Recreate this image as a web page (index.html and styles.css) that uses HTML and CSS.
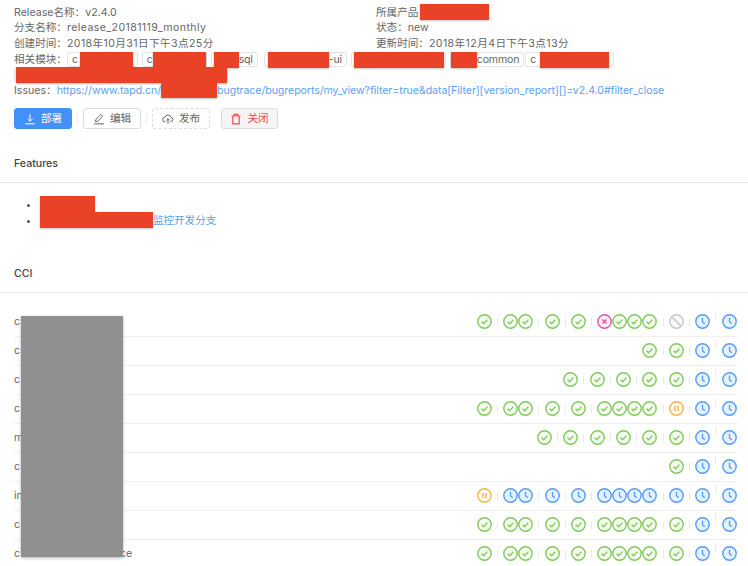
FILE: index.html
```html
<!DOCTYPE html>
<html lang="zh-CN">
<head>
    <meta charset="UTF-8">
    <meta name="viewport" content="width=device-width, initial-scale=1.0">
    <title>Release v2.4.0</title>
    <link rel="stylesheet" href="styles.css">
</head>
<body>
    <svg class="sprite" aria-hidden="true">
        <symbol id="ok" viewBox="0 0 15 15"><circle cx="7.5" cy="7.5" r="6.7" fill="#f6fdf0" stroke="#7fca5c" stroke-width="1.4"/><path d="M4.6 7.7l2.1 2.1 3.7-4.2" fill="none" stroke="#7fca5c" stroke-width="1.4"/></symbol>
        <symbol id="fail" viewBox="0 0 15 15"><circle cx="7.5" cy="7.5" r="6.7" fill="#fff0f7" stroke="#e552a2" stroke-width="1.4"/><path d="M5.4 5.4l4.2 4.2M9.6 5.4l-4.2 4.2" fill="none" stroke="#e552a2" stroke-width="1.4"/></symbol>
        <symbol id="ban" viewBox="0 0 15 15"><circle cx="7.5" cy="7.5" r="6.7" fill="#fafafa" stroke="#c6c6c6" stroke-width="1.4"/><path d="M3 3l9 9" fill="none" stroke="#c6c6c6" stroke-width="1.4"/></symbol>
        <symbol id="wait" viewBox="0 0 15 15"><circle cx="7.5" cy="7.5" r="6.7" fill="#e4f2ff" stroke="#559bfa" stroke-width="1.4"/><path d="M7.5 3.8v4.2l2.2 1.6" fill="none" stroke="#559bfa" stroke-width="1.3"/></symbol>
        <symbol id="hold" viewBox="0 0 15 15"><circle cx="7.5" cy="7.5" r="6.7" fill="#fff9ee" stroke="#f5b34c" stroke-width="1.4"/><path d="M6 5.1v4.8M9 5.1v4.8" fill="none" stroke="#f5b34c" stroke-width="1.4"/></symbol>
    </svg>

    <div class="info">
        <div>Release名称：v2.4.0</div>
        <div>所属产品<i class="red gap r-69"></i></div>
        <div>分支名称：<span class="val">release_20181119_monthly</span></div>
        <div>状态：new</div>
        <div>创建时间：<span class="val">2018年10月31日下午3点25分</span></div>
        <div>更新时间：<span class="val">2018年12月4日下午3点13分</span></div>
        <div class="wide">相关模块：<span class="tag">c<i class="red gap r-53"></i></span><span class="tag pr-0">c<i class="red r-53"></i></span><span class="tag pl-2 mr-6"><i class="red r-25"></i>sql</span><span class="tag pl-3"><i class="red r-61"></i>-ui</span><span class="tag pl-2 pr-1"><i class="red r-90"></i></span><span class="tag pl-0 mr-1"><i class="red r-26"></i>common</span><span class="tag">c<i class="red gap-wide r-69"></i></span>
            <span class="tag pl-1 pr-0"><i class="red r-211"></i></span></div>
        <div class="wide">Issues：<a class="link">https://www.tapd.cn/<i class="red r-56"></i>bugtrace/bugreports/my_view?filter=true&amp;data[Filter][version_report][]=v2.4.0#filter_close</a></div>
    </div>

    <div class="actions">
        <button class="btn primary">
            <svg viewBox="0 0 12 12"><path d="M6 1.2v7M3.4 5.8L6 8.4l2.6-2.6M1.2 10.8h9.6" fill="none" stroke="currentColor"/></svg>部署
        </button>
        <i class="btn-sep"></i>
        <button class="btn">
            <svg viewBox="0 0 12 12"><path d="M2.4 8.6l.5-2.2L7.8 1.5l1.8 1.8-4.9 4.9zM1 10.9h10" fill="none" stroke="currentColor"/></svg>编辑
        </button>
        <i class="btn-sep"></i>
        <button class="btn dashed">
            <svg viewBox="0 0 12 12"><path d="M3.6 8.8H3A2.3 2.3 0 0 1 2.9 4.2 3.2 3.2 0 0 1 9 4.3 2.3 2.3 0 0 1 9 8.8h-.6M6 10.8V6M4.4 7.4L6 5.8l1.6 1.6" fill="none" stroke="currentColor"/></svg>发布
        </button>
        <button class="btn danger">
            <svg viewBox="0 0 12 12"><path d="M1.5 3h9M4.2 3V1.4h3.6V3M2.8 3v7.8h6.4V3" fill="none" stroke="currentColor" stroke-width="1.2"/></svg>关闭
        </button>
    </div>

    <h3 class="head features-head">Features</h3>
    <ul class="features">
        <li><i class="red r-55"></i></li>
        <li><i class="red r-113"></i><a class="link">监控开发分支</a></li>
    </ul>

    <h3 class="head cci-head">CCI</h3>
    <div class="rows">
        <div class="row"><span>c</span><div class="stages">
            <svg class="st"><use href="#ok"/></svg><i class="sep"></i>
            <svg class="st"><use href="#ok"/></svg><svg class="st"><use href="#ok"/></svg><i class="sep"></i>
            <svg class="st"><use href="#ok"/></svg><i class="sep"></i>
            <svg class="st"><use href="#ok"/></svg><i class="sep"></i>
            <svg class="st"><use href="#fail"/></svg><svg class="st"><use href="#ok"/></svg><svg class="st"><use href="#ok"/></svg><svg class="st"><use href="#ok"/></svg><i class="sep"></i>
            <svg class="st"><use href="#ban"/></svg><i class="sep"></i>
            <svg class="st"><use href="#wait"/></svg><i class="sep up"></i>
            <svg class="st"><use href="#wait"/></svg>
        </div></div>
        <div class="row"><span>c</span><div class="stages">
            <svg class="st"><use href="#ok"/></svg><i class="sep"></i>
            <svg class="st"><use href="#ok"/></svg><i class="sep"></i>
            <svg class="st"><use href="#wait"/></svg><i class="sep up"></i>
            <svg class="st"><use href="#wait"/></svg>
        </div></div>
        <div class="row"><span>c</span><div class="stages">
            <svg class="st"><use href="#ok"/></svg><i class="sep"></i>
            <svg class="st"><use href="#ok"/></svg><i class="sep"></i>
            <svg class="st"><use href="#ok"/></svg><i class="sep"></i>
            <svg class="st"><use href="#ok"/></svg><i class="sep"></i>
            <svg class="st"><use href="#ok"/></svg><i class="sep"></i>
            <svg class="st"><use href="#wait"/></svg><i class="sep up"></i>
            <svg class="st"><use href="#wait"/></svg>
        </div></div>
        <div class="row"><span>c</span><div class="stages">
            <svg class="st"><use href="#ok"/></svg><i class="sep"></i>
            <svg class="st"><use href="#ok"/></svg><svg class="st"><use href="#ok"/></svg><i class="sep"></i>
            <svg class="st"><use href="#ok"/></svg><i class="sep"></i>
            <svg class="st"><use href="#ok"/></svg><i class="sep"></i>
            <svg class="st"><use href="#ok"/></svg><svg class="st"><use href="#ok"/></svg><svg class="st"><use href="#ok"/></svg><svg class="st"><use href="#ok"/></svg><i class="sep"></i>
            <svg class="st"><use href="#hold"/></svg><i class="sep"></i>
            <svg class="st"><use href="#wait"/></svg><i class="sep up"></i>
            <svg class="st"><use href="#wait"/></svg>
        </div></div>
        <div class="row"><span>m</span><div class="stages">
            <svg class="st"><use href="#ok"/></svg><i class="sep"></i>
            <svg class="st"><use href="#ok"/></svg><i class="sep"></i>
            <svg class="st"><use href="#ok"/></svg><i class="sep"></i>
            <svg class="st"><use href="#ok"/></svg><i class="sep"></i>
            <svg class="st"><use href="#ok"/></svg><i class="sep"></i>
            <svg class="st"><use href="#ok"/></svg><i class="sep"></i>
            <svg class="st"><use href="#wait"/></svg><i class="sep up"></i>
            <svg class="st"><use href="#wait"/></svg>
        </div></div>
        <div class="row"><span>c</span><div class="stages">
            <svg class="st"><use href="#ok"/></svg><i class="sep"></i>
            <svg class="st"><use href="#wait"/></svg><i class="sep up"></i>
            <svg class="st"><use href="#wait"/></svg>
        </div></div>
        <div class="row"><span>in</span><div class="stages">
            <svg class="st"><use href="#hold"/></svg><i class="sep"></i>
            <svg class="st"><use href="#wait"/></svg><svg class="st"><use href="#wait"/></svg><i class="sep"></i>
            <svg class="st"><use href="#wait"/></svg><i class="sep"></i>
            <svg class="st"><use href="#wait"/></svg><i class="sep"></i>
            <svg class="st"><use href="#wait"/></svg><svg class="st"><use href="#wait"/></svg><svg class="st"><use href="#wait"/></svg><svg class="st"><use href="#wait"/></svg><i class="sep"></i>
            <svg class="st"><use href="#wait"/></svg><i class="sep"></i>
            <svg class="st"><use href="#wait"/></svg><i class="sep up"></i>
            <svg class="st"><use href="#wait"/></svg>
        </div></div>
        <div class="row"><span>c</span><div class="stages">
            <svg class="st"><use href="#ok"/></svg><i class="sep"></i>
            <svg class="st"><use href="#ok"/></svg><svg class="st"><use href="#ok"/></svg><i class="sep"></i>
            <svg class="st"><use href="#ok"/></svg><i class="sep"></i>
            <svg class="st"><use href="#ok"/></svg><i class="sep"></i>
            <svg class="st"><use href="#ok"/></svg><svg class="st"><use href="#ok"/></svg><svg class="st"><use href="#ok"/></svg><svg class="st"><use href="#ok"/></svg><i class="sep"></i>
            <svg class="st"><use href="#ok"/></svg><i class="sep"></i>
            <svg class="st"><use href="#wait"/></svg><i class="sep up"></i>
            <svg class="st"><use href="#wait"/></svg>
        </div></div>
        <div class="row"><span>c<i class="name-gap"></i>ce</span><div class="stages">
            <svg class="st"><use href="#ok"/></svg><i class="sep"></i>
            <svg class="st"><use href="#ok"/></svg><svg class="st"><use href="#ok"/></svg><i class="sep"></i>
            <svg class="st"><use href="#ok"/></svg><i class="sep"></i>
            <svg class="st"><use href="#ok"/></svg><i class="sep"></i>
            <svg class="st"><use href="#ok"/></svg><svg class="st"><use href="#ok"/></svg><svg class="st"><use href="#ok"/></svg><svg class="st"><use href="#ok"/></svg><i class="sep"></i>
            <svg class="st"><use href="#ok"/></svg><i class="sep"></i>
            <svg class="st"><use href="#wait"/></svg><i class="sep up"></i>
            <svg class="st"><use href="#wait"/></svg>
        </div></div>
    </div>

    <div class="names-cover"></div>
</body>
</html>
```

FILE: styles.css
```css
html {
    overflow: hidden;
}
body {
    position: relative;
    margin: 0;
    height: 566px;
    overflow: hidden;
    background: #fff;
    color: #666;
    font-family: Inter, 'Noto Sans CJK SC', sans-serif;
    font-size: 10.6px;
    line-height: 15.7px;
}
.sprite {
    display: none;
}
.info {
    display: grid;
    grid-template-columns: 362px 1fr;
    padding: 4.5px 0 0 14px;
}
.wide {
    grid-column: 1 / -1;
}
.val {
    letter-spacing: 0.4px;
}
.tag {
    display: inline-block;
    box-sizing: border-box;
    height: 15px;
    margin-right: 4px;
    padding: 0 4px;
    border: 1px solid #e4e4e4;
    border-radius: 3px;
    letter-spacing: -0.2px;
    line-height: 13px;
    vertical-align: top;
}
.pl-0 { padding-left: 0; }
.pl-1 { padding-left: 1px; }
.pl-2 { padding-left: 2px; }
.pl-3 { padding-left: 3px; }
.pr-0 { padding-right: 0; }
.pr-1 { padding-right: 1px; }
.mr-1 { margin-right: 1px; }
.mr-6 { margin-right: 6px; }
.link {
    color: #5a9ff5;
    letter-spacing: -0.06px;
}
.red {
    display: inline-block;
    height: 16px;
    margin: -1px 0;
    background: #ea4226;
    box-shadow: 0 1px 2px rgba(0, 0, 0, 0.25);
    vertical-align: top;
}
.red.gap {
    margin-left: 2px;
}
.red.gap-wide {
    margin-left: 4px;
}
.r-25 { width: 25px; }
.r-26 { width: 26px; }
.r-53 { width: 53px; }
.r-55 { width: 55px; }
.r-56 { width: 56px; }
.r-61 { width: 61px; }
.r-69 { width: 69px; }
.r-90 { width: 90px; }
.r-113 { width: 113px; }
.r-211 { width: 211px; }

.actions {
    display: flex;
    align-items: center;
    margin: 9.5px 0 0 14.3px;
}
.btn {
    display: flex;
    align-items: center;
    justify-content: center;
    gap: 5px;
    box-sizing: border-box;
    width: 57.5px;
    height: 21px;
    padding: 0;
    border: 1px solid #dcdcdc;
    border-radius: 3px;
    background: #fff;
    color: #666;
    font: inherit;
}
.btn svg {
    width: 12px;
    height: 12px;
}
.primary {
    border-color: #4390f7;
    background: #4390f7;
    color: #fff;
}
.dashed {
    border-style: dashed;
}
.danger {
    margin-left: 11px;
    background: #f5f5f5;
    color: #ef4b50;
}
.btn-sep {
    width: 1px;
    height: 10px;
    margin: 0 5.25px;
    background: #eee;
}

.head {
    margin: 0;
    padding-left: 14px;
    border-bottom: 1px solid #e8e8e8;
    color: #444;
    font-size: 10.6px;
    font-weight: 500;
}
.features-head {
    margin-top: 27px;
    padding-bottom: 10px;
}
.features {
    margin: 14px 0 0;
    padding-left: 40px;
    color: #555;
}
.features li {
    height: 16px;
}
.cci-head {
    margin-top: 37px;
    padding-bottom: 10px;
}

.rows {
    margin: 15px 11.5px 0 14px;
}
.row {
    display: flex;
    align-items: center;
    justify-content: space-between;
    box-sizing: border-box;
    height: 29px;
    border-bottom: 1px solid #efefef;
}
.name-gap {
    display: inline-block;
    width: 100px;
}
.stages {
    display: flex;
    align-items: center;
}
.st {
    flex: none;
    width: 15px;
    height: 15px;
}
.sep {
    flex: none;
    width: 1px;
    height: 8px;
    margin: 0 5.2px;
    background: #eaeaea;
}
.sep.up {
    margin-bottom: 14px;
}
.names-cover {
    position: absolute;
    left: 21px;
    top: 316px;
    width: 102px;
    height: 241px;
    background: #909090;
    box-shadow: 0 1px 3px rgba(0, 0, 0, 0.3);
}
```
